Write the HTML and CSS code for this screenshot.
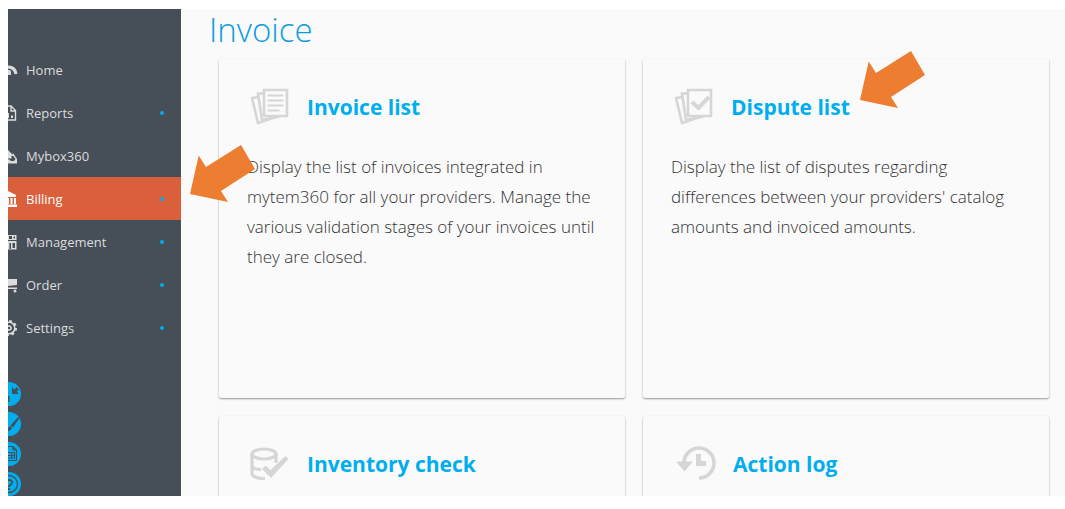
FILE: index.html
```html
<!DOCTYPE html>
<html lang="en">
<head>
<meta charset="utf-8">
<title>Invoice</title>
<link rel="stylesheet" href="styles.css">
</head>
<body>
<div class="app">
  <aside class="sidebar">
    <nav class="nav">
      <a class="nav-item" href="#"><svg class="nav-icon" viewBox="0 0 10 16"><path d="M0 5.200C4 5 7 7 8 12" fill="none" stroke="currentColor" stroke-width="3.200"/><path d="M0 8h1.500q1.500 0 1.500 2v3H0z"/></svg><span>Home</span></a>
      <a class="nav-item has-dot" href="#"><svg class="nav-icon" viewBox="0 0 10 16"><path d="M0 1h3l4.500 4.500V15H0M3 1v5h4.500" fill="none" stroke="currentColor" stroke-width="1.400"/><path d="M0 8h1v5H0zM3 10.500h2V13H3z"/></svg><span>Reports</span></a>
      <a class="nav-item" href="#"><svg class="nav-icon" viewBox="0 0 10 16"><path d="M0 2l6 6H3.500v2.500H0z"/><path d="M5 5l4 6v4.500H0v-4h1.500L3 13h3l1.500-2L4.500 7z"/></svg><span>Mybox360</span></a>
      <a class="nav-item has-dot active" href="#"><svg class="nav-icon" viewBox="0 0 10 16"><path d="M0 0l8 4v2H0zM0 7h1v6H0zM2.500 7h2v6h-2zM6 7h2v6H6zM0 13.500h9V16H0z"/></svg><span>Billing</span>
        <svg class="arrow arrow-billing" viewBox="0 0 65 57" aria-hidden="true"><path d="M0 49L8.700 10.500 16 22 51 0 65 24 31 46 38 57z"/></svg></a>
      <a class="nav-item has-dot" href="#"><svg class="nav-icon" viewBox="0 0 10 16"><path fill-rule="evenodd" d="M0 1h8.500v5H0zM1 2v3h3V2zM5.500 2.500v2h1.500v-2z"/><path fill-rule="evenodd" d="M0 7h8.500v8.500H0zM1.500 9v6h1.500V9zM4.500 9v5h2.500V9z"/></svg><span>Management</span></a>
      <a class="nav-item has-dot" href="#"><svg class="nav-icon" viewBox="0 0 10 16"><path d="M0 2h9v6L0 9zM0 10.500h9V12H0z"/><circle cx="7" cy="14" r="1.500"/></svg><span>Order</span></a>
      <a class="nav-item has-dot" href="#"><svg class="nav-icon" viewBox="0 0 10 16"><circle cx="1" cy="8" r="5.800" fill="none" stroke="currentColor" stroke-width="1.500"/><circle cx="1" cy="8" r="7" fill="none" stroke="currentColor" stroke-width="2" stroke-dasharray="2.750 2.750"/><circle cx="1" cy="8" r="2" fill="none" stroke="currentColor" stroke-width="1.500"/></svg><span>Settings</span></a>
    </nav>
    <div class="tools">
      <button class="tool" type="button" aria-label="Collapse"><svg viewBox="0 0 14 24"><path d="M0 14h1.500v6H0zM4 5v7h7L8.800 9.800 11 7.500 8.800 5.200 6.500 7.500z"/></svg></button>
      <button class="tool" type="button" aria-label="Edit"><svg viewBox="0 0 14 24"><path d="M10 5l1.500 1L5 15.500 2.500 13.500zM2 14l2 2c-1 2-2 3-4 3v-3z"/></svg></button>
      <button class="tool" type="button" aria-label="Sheet"><svg viewBox="0 0 14 24"><path d="M0 4.500h5l3.500 3.500v10.500H0M5 4.500V8h3.500M0 10.500h6.500v5.500H0M0 13.500h6.500M3.500 10.500v5.500" fill="none" stroke="currentColor" stroke-width="1.200"/></svg></button>
      <button class="tool" type="button" aria-label="Help"><svg viewBox="0 0 14 24"><circle cx="1" cy="12" r="8.500" fill="none" stroke="currentColor" stroke-width="1.300"/><path d="M0 8q4 0 4 2.200T1 14v1" fill="none" stroke="currentColor" stroke-width="1.800"/><path d="M0 16h2v2H0z"/></svg></button>
    </div>
  </aside>
  <main class="main">
    <h1 class="title">Invoice</h1>
    <div class="cards">
      <section class="card">
        <h2 class="card-head"><svg class="card-icon" viewBox="0 0 42 40"><g fill="none" stroke="currentColor" stroke-width="2.600"><path d="M15 3h23v26H15z"/><path d="M15 6.500H9l4 26.500 19-4"/><path d="M9 10l-6 1 6 25 18-6"/></g><path d="M18.500 8.500h16M18.500 13.500h16M18.500 18.500h16M18.500 23.500h12" stroke="currentColor" stroke-width="2.200"/></svg><a href="#">Invoice list</a></h2>
        <p class="card-text">Display the list of invoices integrated in mytem360 for all your providers. Manage the various validation stages of your invoices until they are closed.</p>
      </section>
      <section class="card">
        <h2 class="card-head"><svg class="card-icon" viewBox="0 0 42 40"><g fill="none" stroke="currentColor" stroke-width="2.600"><path d="M15 3h23v26H15z"/><path d="M15 6.500H9l4 26.500 19-4"/><path d="M9 10l-6 1 6 25 18-6"/></g><path d="M19 15l6.500 6L36 10" fill="none" stroke="currentColor" stroke-width="4"/></svg><a href="#">Dispute list</a></h2>
        <p class="card-text">Display the list of disputes regarding differences between your providers' catalog amounts and invoiced amounts.</p>
        <svg class="arrow arrow-dispute" viewBox="0 0 65 57" aria-hidden="true"><path d="M0 49L8.700 10.500 16 22 51 0 65 24 31 46 38 57z"/></svg>
      </section>
      <section class="card">
        <h2 class="card-head"><svg class="card-icon" viewBox="0 0 42 40"><g fill="none" stroke="currentColor" stroke-width="3.200"><ellipse cx="15" cy="10" rx="12" ry="5"/><path d="M3 10v20c1 3 6 4.500 13 4.500M27 10v9M3 22c1 2.500 4 3.500 9 3.500"/></g><path d="M13 25l3.500-3.500 5 4.500L36.500 12l3 3L22 34z"/></svg><a href="#">Inventory check</a></h2>
      </section>
      <section class="card">
        <h2 class="card-head"><svg class="card-icon card-icon-wide" viewBox="0 0 44 40"><path d="M11 19a15 15 0 1 1 15 15" fill="none" stroke="currentColor" stroke-width="3.600"/><path d="M3 17.500h17L11.500 27.500zM23 10h5v7h5v5H23z"/></svg><a href="#">Action log</a></h2>
      </section>
    </div>
  </main>
</div>
</body>
</html>
```
FILE: styles.css
```css
* { box-sizing: border-box; }

body {
  margin: 0;
  padding: 9px 0 13px 8px;
  height: 100vh;
  background: #fff;
  font-family: "Open Sans", "Noto Sans", sans-serif;
}

a { color: inherit; text-decoration: none; }
svg { fill: currentColor; }

.app {
  display: flex;
  height: 100%;
  overflow: hidden;
  background: #fafafa;
}

.sidebar {
  flex: none;
  width: 173px;
  padding-top: 39px;
  background: #464e57;
  color: #dcdcdc;
}

.nav-item {
  position: relative;
  display: flex;
  align-items: center;
  gap: 8px;
  height: 43px;
  padding-right: 17px;
  font-size: 13px;
}

.nav-icon { width: 10px; height: 16px; }

.has-dot::after {
  content: "";
  width: 4px;
  height: 4px;
  margin-left: auto;
  border-radius: 50%;
  background: #00aeef;
}

.active { background: #d9603a; color: #fff; }

.tools {
  display: flex;
  flex-direction: column;
  gap: 6px;
  margin-top: 33px;
}

.tool {
  width: 13px;
  height: 24px;
  padding: 0;
  border: 0;
  border-radius: 0 12px 12px 0;
  background: #00aeef;
  color: #464e57;
}

.tool svg { display: block; width: 14px; height: 24px; }

.main {
  flex: 1;
  min-width: 0;
  padding: 0 16px 0 38px;
}

.title {
  margin: 0 0 9px -10px;
  color: #0d9ddb;
  font-size: 33px;
  font-weight: 300;
  line-height: 41px;
}

.cards {
  display: grid;
  grid-template-columns: 1fr 1fr;
  grid-auto-rows: 339px;
  gap: 18px;
}

.card {
  position: relative;
  padding: 28px;
  border-radius: 2px;
  background: #fafafa;
  box-shadow: 0 1px 2px rgba(0, 0, 0, 0.4);
}

.card-head {
  display: flex;
  align-items: center;
  gap: 16px;
  height: 40px;
  margin: 0 0 25px;
  padding-left: 2px;
  color: #00aeef;
  font-size: 21px;
  font-weight: 700;
}

.card-icon {
  width: 42px;
  height: 40px;
  color: #d6d6d6;
}

.card-icon-wide { width: 44px; }

.card-text {
  margin: 0;
  color: #333;
  font-size: 17px;
  font-weight: 300;
  line-height: 30px;
}

.arrow {
  position: absolute;
  z-index: 1;
  width: 65px;
  height: 57px;
  color: #ed7d31;
}

.arrow-billing { left: 182px; top: -32px; }
.arrow-dispute { left: 217px; top: -8px; }
```
